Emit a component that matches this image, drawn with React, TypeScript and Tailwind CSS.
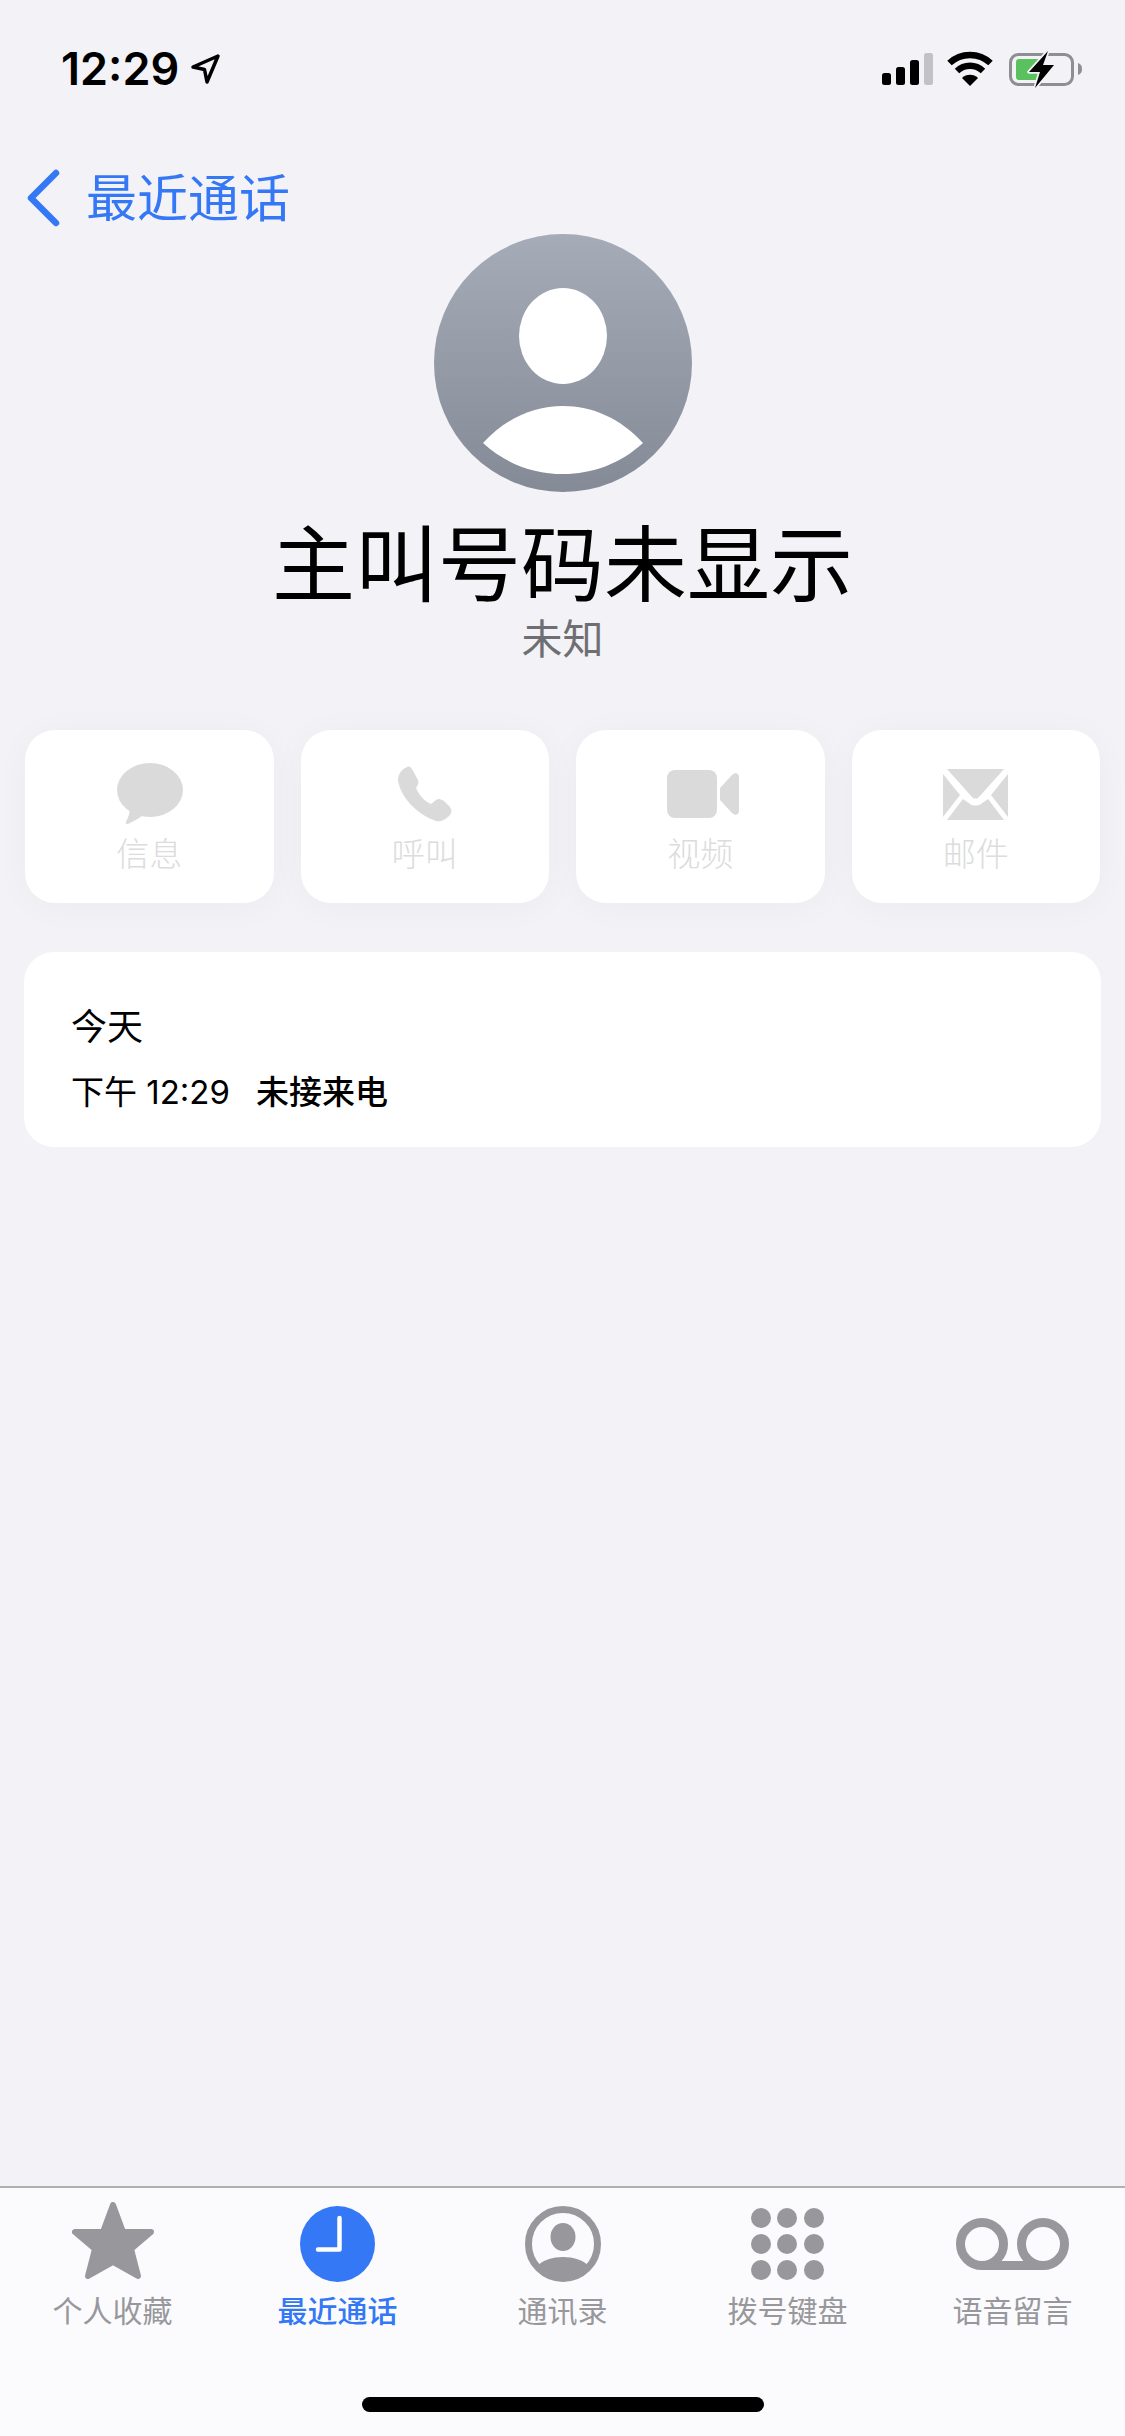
const CJK = "font-['Inter','Noto_Sans_CJK_SC',sans-serif]";

function StatusBar() {
  return (
    <div className="flex h-[170px] items-start justify-between pt-[50px] pl-[61px] pr-[43px]">
      <div className="flex items-center">
        <span className="text-[45px] leading-[38px] font-semibold text-black">12:29</span>
        <svg className="ml-[10px]" width="32" height="32" viewBox="0 0 32 32" fill="none">
          <path d="M29 3 L4 14 L15.5 16.5 L18 29 Z" stroke="#000" strokeWidth="3.5" strokeLinejoin="round" />
        </svg>
      </div>
      <svg className="mt-[1px]" width="200" height="38" viewBox="882 51 200 38" fill="none">
        <rect x="882" y="73" width="9" height="12" rx="2.5" fill="#000" />
        <rect x="896" y="67" width="9" height="18" rx="2.5" fill="#000" />
        <rect x="910" y="60" width="9" height="25" rx="2.5" fill="#000" />
        <rect x="924" y="53" width="9" height="32" rx="2.5" fill="#c2c2c6" />
        <path d="M949.5 63 A30 30 0 0 1 990.5 63" stroke="#000" strokeWidth="6.5" />
        <path d="M957 71 A19 19 0 0 1 983 71" stroke="#000" strokeWidth="6.5" />
        <path d="M970 86 L962 78 A11.5 11.5 0 0 1 978 78 Z" fill="#000" />
        <rect x="1010.5" y="54.5" width="62" height="30" rx="8" stroke="#8e8e93" strokeWidth="3" />
        <rect x="1016" y="59" width="24" height="21" rx="3" fill="#5ac15f" />
        <path d="M1078 63 C1081 64 1082 66 1082 69 C1082 72 1081 74 1078 75 Z" fill="#8e8e93" />
        <path d="M1048 51 L1029 72 L1040 72 L1035 88 L1054 65 L1043 65 Z" fill="#000" stroke="#f2f2f7" strokeWidth="3.5" paintOrder="stroke" strokeLinejoin="round" />
      </svg>
    </div>
  );
}

function NavBack() {
  return (
    <div className="flex h-[55px] items-center pl-[26px]">
      <svg width="36" height="58" viewBox="0 0 36 58" fill="none">
        <path d="M30 4 L5 29 L30 54" stroke="#3478f6" strokeWidth="6.5" strokeLinecap="round" strokeLinejoin="round" />
      </svg>
      <span className="ml-[24px] mt-[2px] text-[51px] leading-[55px] text-[#3478f6]">最近通话</span>
    </div>
  );
}

function Avatar() {
  return (
    <div className="mt-[9px] flex justify-center">
      <div className="relative size-[258px] rounded-full bg-gradient-to-b from-[#a6abb8] to-[#858a97]">
        <svg className="size-full" viewBox="0 0 258 258" fill="none">
          <ellipse cx="129" cy="102" rx="44" ry="48" fill="#fff" />
          <path d="M49 209 C72 184 100 172 129 172 C158 172 186 184 209 209 C186 230 158 240 129 240 C100 240 72 230 49 209 Z" fill="#fff" />
        </svg>
      </div>
    </div>
  );
}

function MessageIcon() {
  return (
    <svg className="ml-[2px]" width="68" height="62" viewBox="0 0 68 62" fill="#dadada">
      <ellipse cx="34" cy="27" rx="33" ry="27" />
      <path d="M14 44 C14 50 12 55 10 59 C9 61 11 61.5 13 60.5 C19 58 25 54 30 50 Z" />
    </svg>
  );
}
function PhoneIcon() {
  return (
    <svg width="54" height="56" viewBox="0 0 54 56" fill="#dadada">
      <path d="M9 1 C11 0 13 1 14 3 L20 14 C21 17 20 19 18 22 C21 29 26 35 33 38 C36 36 38 33 41 33 C43 33 44 34 46 35 L52 41 C54 44 54 47 51 50 C47 54 43 56 38 55 C18 48 2 30 0 14 C0 8 4 3 9 1 Z" />
    </svg>
  );
}
function VideoIcon() {
  return (
    <svg className="ml-[5px]" width="72" height="48" viewBox="0 0 72 48" fill="#dadada">
      <rect x="0" y="0" width="50" height="48" rx="8" />
      <path d="M53 18 L65 5 C68 2 72 3 72 7 L72 41 C72 45 68 46 65 43 L53 30 Z" />
    </svg>
  );
}
function MailIcon() {
  return (
    <svg width="65" height="51" viewBox="0 0 65 51" fill="#dadada">
      <path d="M4 0 L61 0 L36 28 C34 30 31 30 29 28 Z" />
      <path d="M0 5 L0 48 L17 26 Z" />
      <path d="M65 5 L65 48 L48 26 Z" />
      <path d="M4 51 L61 51 L45 30 L38 35 C35 37 30 37 27 35 L20 30 Z" />
    </svg>
  );
}

function ActionButton({ icon, label }: { icon: React.ReactNode; label: string }) {
  return (
    <div className="flex h-[173px] flex-col items-center rounded-[30px] bg-white pt-[33px] shadow-[0_4px_36px_rgba(0,0,0,0.035)]">
      <div className="flex h-[62px] items-center justify-center">{icon}</div>
      <span className="mt-[10px] text-[33px] leading-[38px] font-light text-[#dcdcdc]">{label}</span>
    </div>
  );
}

function Tab({ icon, label, active }: { icon: React.ReactNode; label: string; active?: boolean }) {
  return (
    <div className="flex flex-col items-center">
      <div className="flex h-[80px] items-center justify-center">{icon}</div>
      <span className={active ? "mt-[9px] text-[30px] leading-[36px] font-medium text-[#3478f6]" : "mt-[9px] text-[30px] leading-[36px] text-[#98989c]"}>
        {label}
      </span>
    </div>
  );
}

const gray = "#98989c";

function StarIcon() {
  return (
    <svg className="mb-[7px]" width="82" height="77" viewBox="0 0 82 77" fill={gray} stroke={gray} strokeWidth="6" strokeLinejoin="round">
      <path d="M41 3 L51 30 L79 30 L59 47 L66 74 L41 60 L16 74 L23 47 L3 30 L31 30 Z" />
    </svg>
  );
}
function ClockIcon() {
  return (
    <svg width="75" height="76" viewBox="0 0 75 76" fill="none">
      <ellipse cx="37.5" cy="38" rx="37.5" ry="38" fill="#3478f6" />
      <path d="M39.5 12 L39.5 43.5 L18 43.5" stroke="#fff" strokeWidth="4.5" strokeLinecap="round" strokeLinejoin="round" />
    </svg>
  );
}
function ContactIcon() {
  return (
    <svg width="76" height="76" viewBox="0 0 76 76" fill="none">
      <circle cx="38" cy="38" r="34.5" stroke={gray} strokeWidth="7" />
      <ellipse cx="38" cy="31" rx="12.5" ry="14" fill={gray} />
      <path d="M12 60 C18 54 28 51 38 51 C48 51 58 54 64 60 C58 70 48 74 38 74 C28 74 18 70 12 60 Z" fill={gray} />
    </svg>
  );
}
function KeypadIcon() {
  const rows = [10, 36, 62];
  const cols = [10, 36, 63];
  return (
    <svg width="73" height="73" viewBox="0 0 73 73" fill={gray}>
      {rows.flatMap((y) => cols.map((x) => <circle key={`${x}-${y}`} cx={x} cy={y} r="10" />))}
    </svg>
  );
}
function VoicemailIcon() {
  return (
    <svg width="113" height="52" viewBox="0 0 113 52" fill="none" stroke={gray} strokeWidth="9">
      <circle cx="26" cy="26" r="21.5" />
      <circle cx="87" cy="26" r="21.5" />
      <path d="M26 47.5 L87 47.5" />
    </svg>
  );
}

export default function App() {
  return (
    <div className={`${CJK} flex h-[2436px] w-[1125px] flex-col overflow-hidden bg-[#f2f2f7]`}>
      <StatusBar />
      <NavBack />
      <Avatar />
      <h1 className="mt-[28px] text-center text-[83px] leading-[90px] font-normal text-black">主叫号码未显示</h1>
      <p className="mt-[8px] text-center text-[41px] leading-[42px] text-[#6e6e73]">未知</p>
      <div className="mt-[70px] grid grid-cols-4 gap-[27px] pl-[25px] pr-[25px]">
        <ActionButton icon={<MessageIcon />} label="信息" />
        <ActionButton icon={<PhoneIcon />} label="呼叫" />
        <ActionButton icon={<VideoIcon />} label="视频" />
        <ActionButton icon={<MailIcon />} label="邮件" />
      </div>
      <div className="mx-[24px] mt-[49px] flex h-[195px] flex-col rounded-[30px] bg-white pl-[47px] pt-[54px]">
        <div className="text-[36px] leading-[42px] text-black">今天</div>
        <div className="mt-[23px] flex text-[33px] leading-[42px] text-black">
          <span>下午 12:29</span>
          <span className="ml-[26px] font-medium">未接来电</span>
        </div>
      </div>
      <div className="flex-1" />
      <div className="flex h-[250px] flex-col border-t-2 border-[#b0b0b3] bg-[#fbfbfd]">
        <div className="mt-[16px] grid grid-cols-5">
          <Tab icon={<StarIcon />} label="个人收藏" />
          <Tab icon={<ClockIcon />} label="最近通话" active />
          <Tab icon={<ContactIcon />} label="通讯录" />
          <Tab icon={<KeypadIcon />} label="拨号键盘" />
          <Tab icon={<VoicemailIcon />} label="语音留言" />
        </div>
        <div className="mx-auto mt-[68px] h-[15px] w-[402px] rounded-full bg-black" />
      </div>
    </div>
  );
}
